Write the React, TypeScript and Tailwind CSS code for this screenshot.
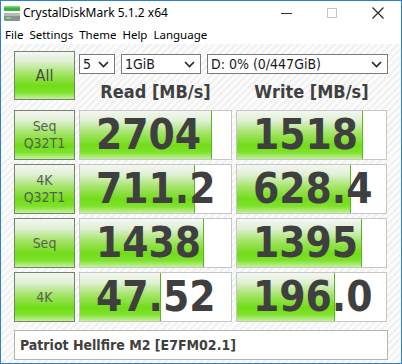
import type { ReactNode } from "react";

interface ResultRow {
  label: string[];
  read: string;
  readFill: number;
  write: string;
  writeFill: number;
}

const rows: ResultRow[] = [
  { label: ["Seq", "Q32T1"], read: "2704", readFill: 132, write: "1518", writeFill: 126 },
  { label: ["4K", "Q32T1"], read: "711.2", readFill: 115, write: "628.4", writeFill: 114 },
  { label: ["Seq"], read: "1438", readFill: 124, write: "1395", writeFill: 125 },
  { label: ["4K"], read: "47.52", readFill: 81, write: "196.0", writeFill: 98 },
];

const greenFace =
  "bg-[linear-gradient(180deg,#f4f6f2_0%,#e0f0d4_20%,#a3e466_46%,#72dc18_72%,#7ee22c_86%,#c2f29a_100%)]";

function AppIcon() {
  return (
    <svg width="18" height="17" viewBox="0 0 18 17">
      <rect x="1" y="1" width="16" height="5" fill="#35b53a" />
      <rect x="1" y="1" width="16" height="1.5" fill="#7ad67c" />
      <rect x="1" y="8" width="16" height="8" rx="1" fill="#8a9096" />
      <rect x="1" y="8" width="16" height="3" fill="#b4b9bd" />
      <rect x="3" y="12" width="5" height="2" fill="#6de06a" />
    </svg>
  );
}

function Chevron() {
  return (
    <svg width="11" height="7" viewBox="0 0 11 7" className="shrink-0">
      <polyline points="1,1 5.5,5.5 10,1" fill="none" stroke="#222" strokeWidth="1.6" />
    </svg>
  );
}

function Select({ width, children }: { width: string; children: ReactNode }) {
  return (
    <div
      className={`${width} flex h-[20px] items-center justify-between border border-[#7a7a7a] bg-white pl-[3px] pr-[5px] text-[14px] leading-none text-[#1a1a1a]`}
    >
      <span>{children}</span>
      <Chevron />
    </div>
  );
}

function TestButton({ lines, big }: { lines: string[]; big?: boolean }) {
  return (
    <div
      className={`${greenFace} flex w-[61px] shrink-0 flex-col items-center justify-center border border-[#75836f] ${
        big ? "h-[49px] text-[16px] text-[#4a4a4a]" : "h-[50px] text-[14px] leading-[17px] text-[#55604f]"
      }`}
    >
      {lines.map((l) => (
        <span key={l}>{l}</span>
      ))}
    </div>
  );
}

function ValueBox({ value, fill, width }: { value: string; fill: number; width: string }) {
  return (
    <div className={`${width} relative h-[50px] border border-[#c6c6c6] bg-white`}>
      <div
        className={`${greenFace} h-full border-r border-[#56b81c]`}
        style={{ width: fill }}
      />
      <div className="absolute inset-0 flex items-center pl-[16px] font-['DejaVu_Sans_Condensed','DejaVu_Sans',sans-serif] text-[42px] font-bold leading-none text-[#3f3f3f]">
        {value}
      </div>
    </div>
  );
}

export default function App() {
  return (
    <div className="flex h-[364px] w-[402px] flex-col border border-[#2a80d8] bg-white font-['DejaVu_Sans_Condensed','DejaVu_Sans',sans-serif]">
      {/* title bar */}
      <div className="flex h-[24px] items-center">
        <div className="pl-[2px] pr-[2px] pt-[1px]">
          <AppIcon />
        </div>
        <span className="font-['Noto_Sans',sans-serif] text-[12px] text-black">
          CrystalDiskMark 5.1.2 x64
        </span>
        <div className="ml-auto flex h-full">
          <div className="flex w-[46px] items-center justify-center">
            <div className="h-[1px] w-[11px] bg-[#333]" />
          </div>
          <div className="flex w-[46px] items-center justify-center">
            <div className="h-[10px] w-[10px] border border-[#c4c4c4]" />
          </div>
          <div className="flex w-[46px] items-center justify-center">
            <svg width="12" height="12" viewBox="0 0 12 12">
              <path d="M0.5 0.5 L11.5 11.5 M11.5 0.5 L0.5 11.5" stroke="#222" strokeWidth="1.1" />
            </svg>
          </div>
        </div>
      </div>

      {/* menu bar */}
      <div className="flex h-[19px] items-center gap-[6px] pl-[4px] font-['Noto_Sans',sans-serif] text-[11.5px] text-black">
        <span>File</span>
        <span>Settings</span>
        <span>Theme</span>
        <span>Help</span>
        <span>Language</span>
      </div>

      {/* client */}
      <div className="flex flex-1 flex-col bg-[image:repeating-linear-gradient(135deg,#f1f1f1_0px,#f1f1f1_2px,#fbfbfb_2px,#fbfbfb_5px)] pl-[13px] pt-[7px]">
        <div className="flex">
          <TestButton lines={["All"]} big />
          <div className="ml-[4px] flex flex-col">
            <div className="mt-[3px] flex gap-[6px]">
              <Select width="w-[36px]">5</Select>
              <Select width="w-[80px]">1GiB</Select>
              <Select width="w-[181px]">D: 0% (0/447GiB)</Select>
            </div>
            <div className="flex h-[31px] items-center pt-[3px] text-[18px] font-bold text-[#404040]">
              <div className="w-[153px] text-center">Read [MB/s]</div>
              <div className="ml-[4px] w-[151px] text-center">Write [MB/s]</div>
            </div>
          </div>
        </div>

        <div className="mt-[5px] flex flex-col gap-[4px]">
          {rows.map((r) => (
            <div key={r.label.join("-") + r.read} className="flex">
              <TestButton lines={r.label} />
              <div className="ml-[4px]">
                <ValueBox value={r.read} fill={r.readFill} width="w-[153px]" />
              </div>
              <div className="ml-[4px]">
                <ValueBox value={r.write} fill={r.writeFill} width="w-[151px]" />
              </div>
            </div>
          ))}
        </div>

        <div className="mt-[8px] flex h-[30px] w-[374px] items-center border border-[#b4b4b4] bg-white pl-[5px] text-[14px] font-bold text-[#404040]">
          Patriot Hellfire M2 [E7FM02.1]
        </div>
      </div>
    </div>
  );
}
